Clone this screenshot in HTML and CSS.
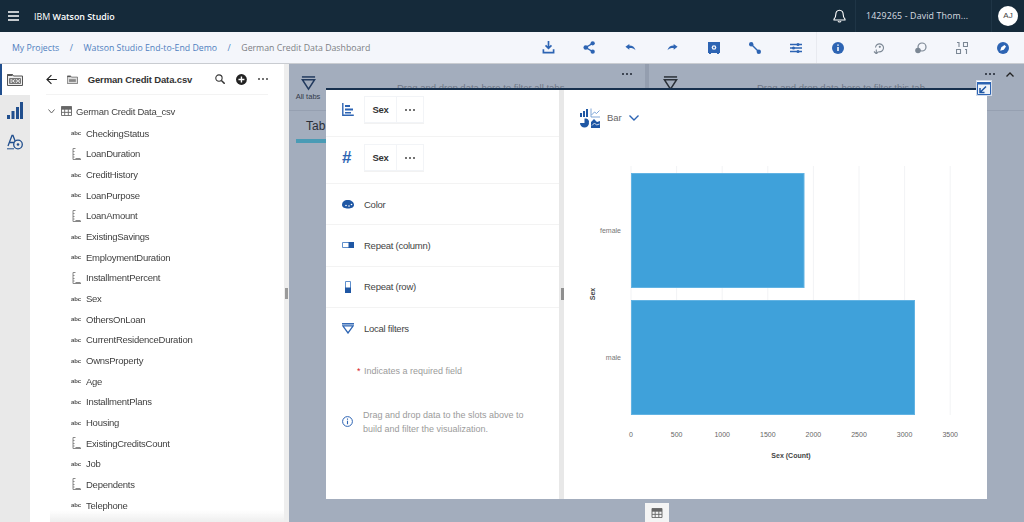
FILE: index.html
```html
<!DOCTYPE html>
<html lang="en">
<head>
<meta charset="utf-8">
<title>German Credit Data Dashboard</title>
<link rel="stylesheet" href="styles.css">
</head>
<body>
<svg class="defs" width="0" height="0" aria-hidden="true">
  <symbol id="measure" viewBox="0 0 9 12"><path d="M1 .5v11h8M1 .5h2.500M1 3.500h1.500M1 6.500h1.500M1 9h1.500M3.500 10.500h5" fill="none" stroke="#888" stroke-width="1"/></symbol>
  <symbol id="table" viewBox="0 0 12 11"><path d="M.5.5h11v10H.5zM.5 3.500h11M.5 7h11M4 3.500v7M8 3.500v7" fill="none" stroke="#666" stroke-width="1"/><path d="M.5.5h11v3H.5z" fill="#666"/></symbol>
  <symbol id="filter" viewBox="0 0 16 16"><path d="M1 1h14" stroke="currentColor" stroke-width="1.600"/><path d="M1.500 4h13L8 14z" fill="none" stroke="currentColor" stroke-width="1.600"/></symbol>
</svg>

<header class="topbar">
  <svg class="burger" width="11" height="10" viewBox="0 0 11 10"><path d="M0 1h11M0 5h11M0 9h11" stroke="#fff" stroke-width="1.400"/></svg>
  <div class="brand"><span class="brand-ibm">IBM</span> Watson Studio</div>
  <svg class="bell" width="13" height="14" viewBox="0 0 13 14"><path d="M6.500 1.200c-2.600 0-3.700 2-3.700 4.300 0 2.300-.6 3.500-1.800 4.600v.9h11v-.9c-1.200-1.100-1.800-2.300-1.800-4.600 0-2.300-1.100-4.300-3.700-4.300zM5 12.200c.4 1 2.600 1 3 0" fill="none" stroke="#fff" stroke-width="1.100"/></svg>
  <div class="user">1429265 - David Thom...</div>
  <div class="avatar-cell"><div class="avatar">AJ</div></div>
</header>

<nav class="crumbs">
  <a class="crumb-link">My Projects</a><span class="crumb-sep">/</span>
  <a class="crumb-link">Watson Studio End-to-End Demo</a><span class="crumb-sep">/</span>
  <span class="crumb-here">German Credit Data Dashboard</span>
  <div class="tools">
    <span class="tool"><svg width="13" height="13" viewBox="0 0 14 14"><path d="M7 0v7.500M3.800 4.800 7 8l3.200-3.200" fill="none" stroke="#2d64b3" stroke-width="1.800"/><path d="M1.500 9v3.500h11V9" fill="none" stroke="#2d64b3" stroke-width="1.800"/></svg></span>
    <span class="tool"><svg width="12" height="13" viewBox="0 0 13 14"><path d="M10.500 2.500 3 7l7.500 4.500" fill="none" stroke="#2d64b3" stroke-width="1.400"/><circle cx="10.500" cy="2.500" r="2.300" fill="#2d64b3"/><circle cx="3" cy="7" r="2.500" fill="#2d64b3"/><circle cx="10.500" cy="11.500" r="2.300" fill="#2d64b3"/></svg></span>
    <span class="tool"><svg width="11" height="7" viewBox="0 0 13 9"><path d="M0 3.500 5 0v2c4 0 6.500 1.800 8 6-1.800-2.300-4-3-8-3v2.500z" fill="#2d64b3"/></svg></span>
    <span class="tool"><svg width="11" height="7" viewBox="0 0 13 9"><path d="M13 3.500 8 0v2C4 2 1.500 3.800 0 8c1.800-2.300 4-3 8-3v2.500z" fill="#2d64b3"/></svg></span>
    <span class="tool"><svg width="12" height="12" viewBox="0 0 12 12"><path d="M0 0h12v11h-1v1H9v-1H3v1H1v-1H0z" fill="#2d64b3"/><circle cx="6" cy="5.500" r="2.300" fill="#f4f6fb"/><circle cx="6" cy="5.500" r="1" fill="#2d64b3"/></svg></span>
    <span class="tool"><svg width="12" height="12" viewBox="0 0 12 12"><path d="M2 2 10 10" stroke="#2d64b3" stroke-width="1.500"/><circle cx="2.200" cy="2.200" r="2.200" fill="#2d64b3"/><circle cx="9.800" cy="9.800" r="2.200" fill="#2d64b3"/></svg></span>
    <span class="tool tool-last"><svg width="12" height="10" viewBox="0 0 12 10"><path d="M0 1.500h12M0 5h12M0 8.500h12" stroke="#2d64b3" stroke-width="1.300"/><circle cx="8" cy="1.500" r="1.500" fill="#2d64b3"/><circle cx="3.500" cy="5" r="1.500" fill="#2d64b3"/><circle cx="8" cy="8.500" r="1.500" fill="#2d64b3"/></svg></span>
    <span class="tool"><svg width="12" height="12" viewBox="0 0 12 12"><circle cx="6" cy="6" r="6" fill="#2d64b3"/><path d="M6 5v4M6 2.500v1.300" stroke="#fff" stroke-width="1.500"/></svg></span>
    <span class="tool"><svg width="12" height="12" viewBox="0 0 12 12"><path d="M2.500 5.500a4 4 0 1 1 3.500 4.300M3.300 7.500v4M1 9.500l2.300 2.300 2.300-2.300" fill="none" stroke="#7b8794" stroke-width="1.100"/><circle cx="6.800" cy="4.800" r="1.100" fill="#7b8794"/></svg></span>
    <span class="tool"><svg width="12" height="12" viewBox="0 0 12 12"><circle cx="7" cy="5" r="4" fill="none" stroke="#7b8794" stroke-width="1.200"/><circle cx="3" cy="8.500" r="2.800" fill="#7b8794"/></svg></span>
    <span class="tool"><svg width="12" height="12" viewBox="0 0 12 12"><path d="M1 .500h2v4.500M7.500.500h4v4h-4zM.500 7.500h4v4h-4zM9 7.500h1.500V12" fill="none" stroke="#7b8794" stroke-width="1.100"/></svg></span>
    <span class="tool"><svg width="12" height="12" viewBox="0 0 12 12"><circle cx="6" cy="6" r="6" fill="#2d64b3"/><path d="M3.200 8.800 4.300 5.200 7.500 3l1.500 1.500-2.200 3.200z" fill="#fff"/></svg></span>
  </div>
</nav>

<main class="workspace">
  <aside class="rail">
    <div class="rail-item rail-active"><svg width="16" height="13" viewBox="0 0 16 13"><path d="M.5 1.500h5l1 1.500h9v9.500H.5z" fill="#eee" stroke="#555"/><path d="M.5 1h5v2H.5z" fill="#555"/><path d="M2.500 5.500h11v5h-11z" fill="none" stroke="#777"/><text x="8" y="10" text-anchor="middle" class="ioio">IOIO</text></svg></div>
    <div class="rail-item"><svg width="16" height="17" viewBox="0 0 16 17"><path d="M0 13h3v4H0zM4.500 9h3v8h-3zM9 5h3v12H9zM13 0h3v17h-3z" fill="#214f8e"/></svg></div>
    <div class="rail-item"><svg width="16" height="16" viewBox="0 0 16 16"><path d="M1 12 5 1.500h1L10 12M2.800 8.500H8" fill="none" stroke="#214f8e" stroke-width="1.300"/><circle cx="11" cy="10.500" r="4.300" fill="#e9e9e9" stroke="#214f8e" stroke-width="1.300"/><circle cx="11" cy="10.500" r="1.300" fill="#214f8e"/><path d="M0 14.800h7" stroke="#214f8e" stroke-width="1"/></svg></div>
  </aside>

  <section class="data-panel">
    <div class="panel-head">
      <svg class="back" width="11" height="11" viewBox="0 0 11 11"><path d="M11 5.500H1M5.500 1 1 5.500 5.500 10" fill="none" stroke="#222" stroke-width="1.200"/></svg>
      <svg class="file-icon" width="11" height="9" viewBox="0 0 16 13"><path d="M.5 1.500h5l1 1.500h9v9.500H.5z" fill="#ddd" stroke="#555"/><path d="M.5 1h5v2H.5z" fill="#555"/><path d="M3 6h10v4H3z" fill="#888"/></svg>
      <div class="panel-title">German Credit Data.csv</div>
      <svg class="search" width="10" height="10" viewBox="0 0 10 10"><circle cx="4" cy="4" r="3.200" fill="none" stroke="#333" stroke-width="1.100"/><path d="M6.500 6.500 9.800 9.800" stroke="#333" stroke-width="1.500"/></svg>
      <svg class="plus" width="11" height="11" viewBox="0 0 11 11"><circle cx="5.500" cy="5.500" r="5.500" fill="#222"/><path d="M5.500 2.500v6M2.500 5.500h6" stroke="#fff" stroke-width="1.400"/></svg>
      <span class="dots"><i></i><i></i><i></i></span>
    </div>
    <div class="tree-root">
      <svg class="chev" width="7" height="5" viewBox="0 0 7 5"><path d="M.5.500 3.500 4l3-3.500" fill="none" stroke="#666"/></svg>
      <svg class="table-ico" width="11" height="10"><use href="#table"/></svg>
      <span>German Credit Data_csv</span>
    </div>
    <ul class="fields">
      <li><b class="abc">abc</b>CheckingStatus</li>
      <li><svg class="ruler" width="9" height="12"><use href="#measure"/></svg>LoanDuration</li>
      <li><b class="abc">abc</b>CreditHistory</li>
      <li><b class="abc">abc</b>LoanPurpose</li>
      <li><svg class="ruler" width="9" height="12"><use href="#measure"/></svg>LoanAmount</li>
      <li><b class="abc">abc</b>ExistingSavings</li>
      <li><b class="abc">abc</b>EmploymentDuration</li>
      <li><svg class="ruler" width="9" height="12"><use href="#measure"/></svg>InstallmentPercent</li>
      <li><b class="abc">abc</b>Sex</li>
      <li><b class="abc">abc</b>OthersOnLoan</li>
      <li><b class="abc">abc</b>CurrentResidenceDuration</li>
      <li><b class="abc">abc</b>OwnsProperty</li>
      <li><b class="abc">abc</b>Age</li>
      <li><b class="abc">abc</b>InstallmentPlans</li>
      <li><b class="abc">abc</b>Housing</li>
      <li><svg class="ruler" width="9" height="12"><use href="#measure"/></svg>ExistingCreditsCount</li>
      <li><b class="abc">abc</b>Job</li>
      <li><svg class="ruler" width="9" height="12"><use href="#measure"/></svg>Dependents</li>
      <li><b class="abc">abc</b>Telephone</li>
    </ul>
  </section>

  <div class="splitter"></div>

  <section class="canvas">
    <div class="filter-bar">
      <div class="filter-cell filter-all">
        <div class="filter-tag"><svg width="15" height="15"><use href="#filter"/></svg><span>All tabs</span></div>
        <span class="filter-hint">Drag and drop data here to filter all tabs</span>
        <span class="dots dots-dark"><i></i><i></i><i></i></span>
      </div>
      <div class="filter-cell filter-tab">
        <div class="filter-tag"><svg width="15" height="15"><use href="#filter"/></svg></div>
        <span class="filter-hint">Drag and drop data here to filter this tab</span>
        <span class="dots dots-dark"><i></i><i></i><i></i></span>
        <svg class="collapse" width="8" height="5" viewBox="0 0 8 5"><path d="M.5 4.500 4 1l3.500 3.500" fill="none" stroke="#222" stroke-width="1.300"/></svg>
      </div>
    </div>
    <div class="tab">Tab</div>

    <div class="modal">
      <div class="slots">
        <div class="slot slot-tall">
          <svg class="slot-ico" width="12" height="13" viewBox="0 0 12 13"><path d="M.8 0v13M.8 12.300h11" stroke="#2d64b3" stroke-width="1.400"/><path d="M3 2h5v2H3zM3 5.500h8v2H3zM3 9h6v1.500H3z" fill="#2d64b3"/></svg>
          <div class="pill"><span class="pill-name">Sex</span><span class="pill-more"><span class="dots"><i></i><i></i><i></i></span></span></div>
        </div>
        <div class="slot slot-tall slot-second">
          <span class="slot-hash">#</span>
          <div class="pill"><span class="pill-name">Sex</span><span class="pill-more"><span class="dots"><i></i><i></i><i></i></span></span></div>
        </div>
        <div class="slot">
          <svg class="slot-ico" width="12" height="10" viewBox="0 0 12 10"><path d="M0 6c0-3 2-5 6-5 3 0 6 2 6 5 0 2.500-3 3.500-6 3.500S0 8.500 0 6z" fill="#1f57a4"/><circle cx="4" cy="6.500" r=".8" fill="#fff"/><circle cx="7" cy="7" r=".8" fill="#fff"/><circle cx="9.500" cy="5.500" r=".8" fill="#fff"/></svg>
          <span>Color</span>
        </div>
        <div class="slot">
          <svg class="slot-ico" width="12" height="6" viewBox="0 0 12 6"><path d="M.5.500h11v5H.5z" fill="#fff" stroke="#5f8fcc"/><path d="M6.500 0H12v6H6.500z" fill="#1f57a4"/></svg>
          <span>Repeat (column)</span>
        </div>
        <div class="slot">
          <svg class="slot-ico slot-ico-row" width="6" height="12" viewBox="0 0 6 12"><path d="M.5.500h5v11h-5z" fill="#fff" stroke="#5f8fcc"/><path d="M0 6.500h6V12H0z" fill="#1f57a4"/></svg>
          <span>Repeat (row)</span>
        </div>
        <div class="slot slot-open">
          <svg class="slot-ico" width="12" height="11" viewBox="0 0 12 11"><path d="M0 .800h12" stroke="#2d64b3" stroke-width="1.500"/><path d="M.8 2.800h10.400L6 10z" fill="none" stroke="#2d64b3" stroke-width="1.300"/></svg>
          <span>Local filters</span>
        </div>
        <p class="required"><span class="star">*</span> Indicates a required field</p>
        <div class="hint">
          <svg class="hint-ico" width="11" height="11" viewBox="0 0 11 11"><circle cx="5.500" cy="5.500" r="4.900" fill="none" stroke="#2d64b3"/><path d="M5.500 4.800v3.500M5.500 2.500v1.200" stroke="#2d64b3" stroke-width="1.100"/></svg>
          <p>Drag and drop data to the slots above to build and filter the visualization.</p>
        </div>
      </div>
      <div class="modal-split"></div>
      <div class="viz">
        <div class="viz-head">
          <svg width="20" height="20" viewBox="0 0 20 20"><path d="M0 5h2v4H0zM3 3h2v6H3zM6 1h2v8H6z" fill="#1f57a4"/><path d="M11 .500v8.500h9M11.500 7l3-3 2 1.500 3-3" fill="none" stroke="#5f8fcc" stroke-width=".8"/><path d="M4.500 10.500a4.500 4.500 0 1 1-4.500 4.500h4.500z" fill="#1f57a4"/><path d="M5.500 10.500a4 4 0 0 1 3.500 3.500H5.500z" fill="#1f57a4"/><path d="M11 20v-6l3-3 3 3 3-1v7z" fill="#1f57a4"/><path d="M12 17.500l2.500-2.500 2 2 3-1" fill="none" stroke="#fff" stroke-width=".8"/></svg>
          <span class="viz-type">Bar</span>
          <svg width="10" height="6" viewBox="0 0 10 6"><path d="M.5.500 5 5 9.500.500" fill="none" stroke="#2d64b3" stroke-width="1.400"/></svg>
        </div>
        <svg class="chart" width="423" height="364" viewBox="564 135 423 364">
          <g class="grid">
            <path d="M631 166V415M676.600 166V415M722.200 166V415M767.800 166V415M813.400 166V415M859 166V415M904.600 166V415M950.200 166V415"/>
          </g>
          <rect class="bar" x="631.500" y="173.500" width="172.500" height="114"/>
          <rect class="bar" x="631.500" y="300.500" width="283" height="114"/>
          <g class="ticks">
            <text x="631" y="437">0</text><text x="676.600" y="437">500</text><text x="722.200" y="437">1000</text><text x="767.800" y="437">1500</text><text x="813.400" y="437">2000</text><text x="859" y="437">2500</text><text x="904.600" y="437">3000</text><text x="950.200" y="437">3500</text>
          </g>
          <text class="cat" x="621" y="232.500">female</text>
          <text class="cat" x="621" y="360">male</text>
          <text class="axis" x="791" y="458">Sex (Count)</text>
          <text class="axis" transform="translate(594.500 294) rotate(-90)">Sex</text>
        </svg>
      </div>
    </div>

    <button class="expand" type="button" aria-label="Collapse"><svg width="14" height="13" viewBox="0 0 14 13"><path d="M.5 .5h13v12H.5z" fill="#eef3fa" stroke="#2d64b3"/><path d="M0 0h14v2.500H0z" fill="#2d64b3"/><path d="M9 4.500 3.500 10M3 6v4.500h4.500" fill="none" stroke="#1f57a4" stroke-width="1.500"/></svg></button>
    <div class="table-toggle"><svg width="12" height="10"><use href="#table"/></svg></div>
  </section>
</main>
</body>
</html>
```
FILE: styles.css
```css
* { box-sizing: border-box; }
html, body { margin: 0; height: 522px; overflow: hidden; }
body {
  display: flex;
  flex-direction: column;
  font-family: "Liberation Sans", Arial, sans-serif;
  font-size: 10px;
  color: #3a3a3a;
  background: #fff;
  filter: blur(.3px);
}
.defs { position: absolute; }
.ioio { font: 700 4.500px "Liberation Sans", sans-serif; fill: #555; }

.topbar {
  flex: 0 0 32px;
  display: flex;
  align-items: center;
  background: #152a3a;
  color: #fff;
}
.burger { margin-left: 8px; }
.brand { margin-left: 15px; font-family: "Open Sans", sans-serif; font-size: 8.900px; font-weight: 600; }
.brand-ibm { font-weight: 400; }
.bell { margin-left: auto; margin-right: 9px; }
.user {
  width: 137px;
  align-self: stretch;
  display: flex;
  align-items: center;
  padding-left: 10px;
  border-left: 1px solid #1f3546;
  border-right: 1px solid #1f3546;
  color: #d9dde1;
  font-family: "Open Sans", sans-serif;
  font-size: 8.800px;
  letter-spacing: .15px;
}
.avatar-cell { width: 32px; display: flex; justify-content: center; }
.avatar {
  width: 20px;
  height: 20px;
  border-radius: 50%;
  background: #fff;
  color: #444;
  font-size: 8px;
  line-height: 20px;
  text-align: center;
}

.crumbs {
  flex: 0 0 32px;
  display: flex;
  align-items: center;
  padding-left: 12px;
  background: #f4f6fb;
  border-bottom: 1px solid #c9ccd1;
  font-family: "Open Sans", sans-serif;
  font-size: 8.750px;
}
.crumb-link { color: #4f7fc0; }
.crumb-sep { margin: 0 10.500px; color: #4f7fc0; }
.crumb-here { color: #7c7f84; }
.tools { margin-left: auto; display: flex; align-self: stretch; }
.tool {
  width: 41.400px;
  display: flex;
  align-items: center;
  justify-content: center;
}
.tool-last { border-right: 1px solid #e8eaf0; }

.workspace { flex: 1; display: flex; min-height: 0; }

.rail { flex: 0 0 30px; background: #e9e9e9; display: flex; flex-direction: column; }
.rail-item {
  height: 31px;
  display: flex;
  align-items: center;
  justify-content: center;
}
.rail-active { background: #fff; border-left: 2px solid #214f8e; padding-right: 2px; }

.data-panel { flex: 0 0 254px; background: #fff; position: relative; overflow: hidden; }
.data-panel::after {
  content: "";
  position: absolute;
  left: 20px;
  right: 0;
  bottom: 0;
  height: 12px;
  background: linear-gradient(rgba(235, 235, 235, 0), #eeeeee);
}
.panel-head {
  height: 31px;
  margin: 0 16px;
  display: flex;
  align-items: center;
  border-bottom: 1px solid #f3f3f3;
}
.file-icon { margin-left: 10px; }
.panel-title { margin-left: 10px; width: 129px; font-size: 9.500px; font-weight: 700; color: #333; letter-spacing: -.15px; white-space: nowrap; }
.plus { margin: 0 11px; }
.dots { display: inline-flex; gap: 2px; }
.dots i { width: 2px; height: 2px; border-radius: 50%; background: #444; }
.dots-dark i { background: #1c2530; }
.tree-root {
  height: 28px;
  padding: 4px 0 0 18px;
  display: flex;
  align-items: center;
  font-size: 9.500px;
  color: #444;
  letter-spacing: -.25px;
}
.table-ico { margin: 0 4px 0 6px; }
.fields { list-style: none; margin: 0; padding: 0 0 0 41px; }
.fields li {
  height: 20.670px;
  display: flex;
  align-items: center;
  color: #3f3f3f;
  font-size: 9.500px;
  letter-spacing: -.25px;
}
.abc { width: 15px; font-size: 6px; color: #555; letter-spacing: -.1px; }
.ruler { margin-right: 5px; margin-left: 1px; }

.splitter { flex: 0 0 5px; background: #eeeeee; position: relative; }
.splitter::after {
  content: "";
  position: absolute;
  left: 1px;
  top: 224px;
  width: 2.500px;
  height: 11px;
  background: #9a9a9a;
}

.canvas { flex: 1; background: #a3adbd; position: relative; min-width: 0; }
.filter-bar { height: 47px; display: flex; border-bottom: 1px solid #96a0b1; }
.filter-cell { position: relative; display: flex; }
.filter-all { flex: 0 0 360px; border-right: 4px solid #949eaf; }
.filter-tab { flex: 1; }
.filter-tag {
  position: absolute;
  top: 12px;
  left: 7px;
  width: 24px;
  display: flex;
  flex-direction: column;
  align-items: center;
  font-size: 7.500px;
  color: #223a5e;
}
.filter-tag span { color: #333b4a; white-space: nowrap; margin-top: 1px; }
.filter-tab .filter-tag { left: 9px; color: #2a3038; }
.filter-hint { position: absolute; top: 18px; left: 108px; color: #6f7786; font-size: 9.500px; white-space: nowrap; }
.filter-cell > .dots { position: absolute; top: 9px; right: 13px; }
.filter-tab > .dots { right: 29px; }
.collapse { position: absolute; top: 8px; right: 10px; }
.tab {
  margin-left: 7px;
  width: 37px;
  height: 32px;
  padding: 8px 0 0 10px;
  border-bottom: 4px solid #4a9bb5;
  color: #2a2f38;
  font-size: 12px;
}

.modal {
  position: absolute;
  left: 37px;
  top: 24px;
  width: 661px;
  height: 411px;
  display: flex;
  background: #fff;
  border-top: 2px solid #17304d;
}
.slots { flex: 0 0 233px; }
.slot {
  height: 41.300px;
  display: flex;
  align-items: center;
  border-bottom: 1px solid #f3f3f3;
  padding-left: 16px;
  font-size: 9.500px;
  letter-spacing: -.25px;
  color: #444;
}
.slot-tall { height: 47px; align-items: flex-start; padding-top: 6px; }
.slot-tall .slot-ico { margin-top: 7px; }
.slot-second { padding-top: 7px; }
.slot-open { border-bottom: 0; }
.slot-ico { margin-right: 10px; flex: none; }
.slot-ico-row { margin: 0 13px 0 3px; }
.slot-hash { width: 22px; margin-top: 5px; color: #2d64b3; font-size: 17px; font-weight: 700; line-height: 1; }
.pill { display: flex; height: 27px; border: 1px solid #f2f4f7; box-shadow: 0 1px 0 #f2f2f2; }
.pill-name {
  width: 32px;
  border-right: 1px solid #f2f4f7;
  text-align: center;
  line-height: 25px;
  font-weight: 700;
  font-size: 9.500px;
  color: #333;
}
.pill-more { width: 26px; display: flex; align-items: center; justify-content: center; }
.required { margin: 17px 0 0 31px; color: #9b9b9b; font-size: 9px; }
.star { color: #d8202a; margin-right: 1px; }
.hint { display: flex; margin: 32px 24px 0 16px; color: #9b9b9b; font-size: 9px; line-height: 14px; }
.hint p { margin: 0; }
.hint-ico { flex: none; margin: 8px 10px 0 0; }

.modal-split { flex: 0 0 5px; background: #e8e8e8; position: relative; }
.modal-split::after {
  content: "";
  position: absolute;
  left: 1.500px;
  top: 198px;
  width: 3px;
  height: 12px;
  background: #8f8f8f;
}
.viz { flex: 1; min-width: 0; display: flex; flex-direction: column; }
.viz-head {
  flex: 0 0 45px;
  display: flex;
  align-items: flex-start;
  padding: 18px 0 0 16px;
  color: #666;
  font-size: 9.500px;
}
.viz-type { margin: 4px 7px 0 7px; }
.viz-head svg:last-child { margin-top: 7px; }
.chart { display: block; }
.grid path { stroke: #f2f3f5; fill: none; }
.bar { fill: #3fa1da; stroke: #62b3e3; stroke-width: 1; }
.ticks text { font-size: 7px; fill: #666; text-anchor: middle; }
.cat { font-size: 7px; fill: #777; text-anchor: end; }
.axis { font-size: 7px; font-weight: 700; fill: #444; text-anchor: middle; }

.expand {
  position: absolute;
  left: 687px;
  top: 16px;
  width: 16px;
  height: 16px;
  padding: 0;
  display: flex;
  align-items: center;
  justify-content: center;
  background: #fff;
  border: 1px solid #d4dcea;
}
.table-toggle {
  position: absolute;
  left: 356px;
  bottom: 0;
  width: 24px;
  height: 19px;
  display: flex;
  align-items: center;
  justify-content: center;
  background: #f4f4f4;
}
```
